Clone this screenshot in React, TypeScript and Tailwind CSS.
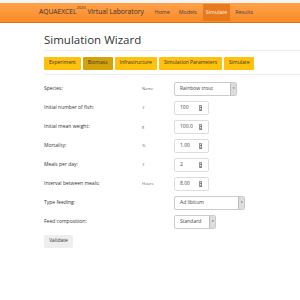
import React from "react";

const rows: { label: string; unit: string; kind: "select" | "num"; value: string; w?: number }[] = [
  { label: "Species:", unit: "Name", kind: "select", value: "Rainbow trout", w: 63 },
  { label: "Initial number of fish:", unit: "#", kind: "num", value: "100" },
  { label: "Initial mean weight:", unit: "g", kind: "num", value: "100.0" },
  { label: "Mortality:", unit: "%", kind: "num", value: "1.00" },
  { label: "Meals per day:", unit: "#", kind: "num", value: "2" },
  { label: "Interval between meals:", unit: "Hours", kind: "num", value: "8.00" },
  { label: "Type feeding:", unit: "", kind: "select", value: "Ad libitum", w: 71 },
  { label: "Feed composition:", unit: "", kind: "select", value: "Standard", w: 42 },
];

function Spinner() {
  return (
    <div className="flex flex-col w-[3px] h-[6px] border border-[#999] bg-[#eee]">
      <div className="flex-1 flex items-center justify-center text-[3px] leading-none">▴</div>
      <div className="flex-1 flex items-center justify-center text-[3px] leading-none">▾</div>
    </div>
  );
}

export default function App() {
  const tabs = ["Experiment", "Biomass", "Infrastructure", "Simulation Parameters", "Simulate"];
  return (
    <div className="w-[300px] h-[300px] bg-white overflow-hidden" style={{ fontFamily: '"Open Sans", "Liberation Sans", sans-serif' }}>
      <div className="h-[3px] bg-[#f4f4f4]" />
      <div className="h-[20px] bg-gradient-to-b from-[#ffa14a] to-[#f98b25] border-b border-[#d96f10] flex items-center">
        <div className="ml-[39px] text-[6.7px] text-[#333] leading-none whitespace-nowrap">
          AQUAEXCEL<sup className="text-[4px] align-top relative top-[-1px]">2020</sup> Virtual Laboratory
        </div>
        <div className="flex items-center ml-[7px] text-[5.3px] text-[#444]">
          <div className="px-[4px] py-[4px]">Home</div>
          <div className="px-[4px] py-[4px] ml-[1px]">Models</div>
          <div className="px-[3px] py-[5px] ml-[2px] bg-[#e8791c] text-[#fff3e6]">Simulate</div>
          <div className="px-[4px] py-[4px] ml-[1px]">Results</div>
        </div>
      </div>
      <div className="pl-[44px]">
        <div className="mt-[11px] text-[11.5px] leading-none text-[#333]">Simulation Wizard</div>
        <div className="mt-[4px] border-t border-[#eee] pt-[6px] pb-[4px] border-b flex gap-[2px]">
          {tabs.map((t) => (
            <div
              key={t}
              className={
                "h-[13px] px-[5px] flex items-center text-[5px] text-[#333] rounded-[1px] whitespace-nowrap " +
                (t === "Biomass" ? "bg-[#d4a20a]" : "bg-[#fec10e]")
              }
            >
              {t}
            </div>
          ))}
        </div>
        <div className="mt-[7px] flex flex-col gap-[5px]">
          {rows.map((r) => (
            <div key={r.label} className="flex items-center h-[14px]">
              <div className="w-[98px] text-[5px] text-[#333]">{r.label}</div>
              <div className="w-[32px] text-[4px] text-[#666]">{r.unit}</div>
              {r.kind === "select" ? (
                <div
                  className="h-[14px] border border-[#ccc] rounded-[2px] flex items-center text-[5px] text-[#444] bg-white"
                  style={{ width: r.w }}
                >
                  <div className="flex-1 pl-[5px]">{r.value}</div>
                  <div className="w-[6px] h-full bg-[#ddd] border-l border-[#bbb] flex items-center justify-center text-[3px]">▾</div>
                </div>
              ) : (
                <div className="w-[35px] h-[14px] border border-[#ddd] rounded-[2px] flex items-center text-[5px] text-[#444] bg-white">
                  <div className="flex-1 pl-[5px]">{r.value}</div>
                  <div className="mr-[6px]"><Spinner /></div>
                </div>
              )}
            </div>
          ))}
        </div>
        <div className="mt-[6px] w-[29px] h-[13px] bg-[#eee] rounded-[2px] flex items-center justify-center text-[5px] text-[#333]">
          Validate
        </div>
      </div>
    </div>
  );
}
